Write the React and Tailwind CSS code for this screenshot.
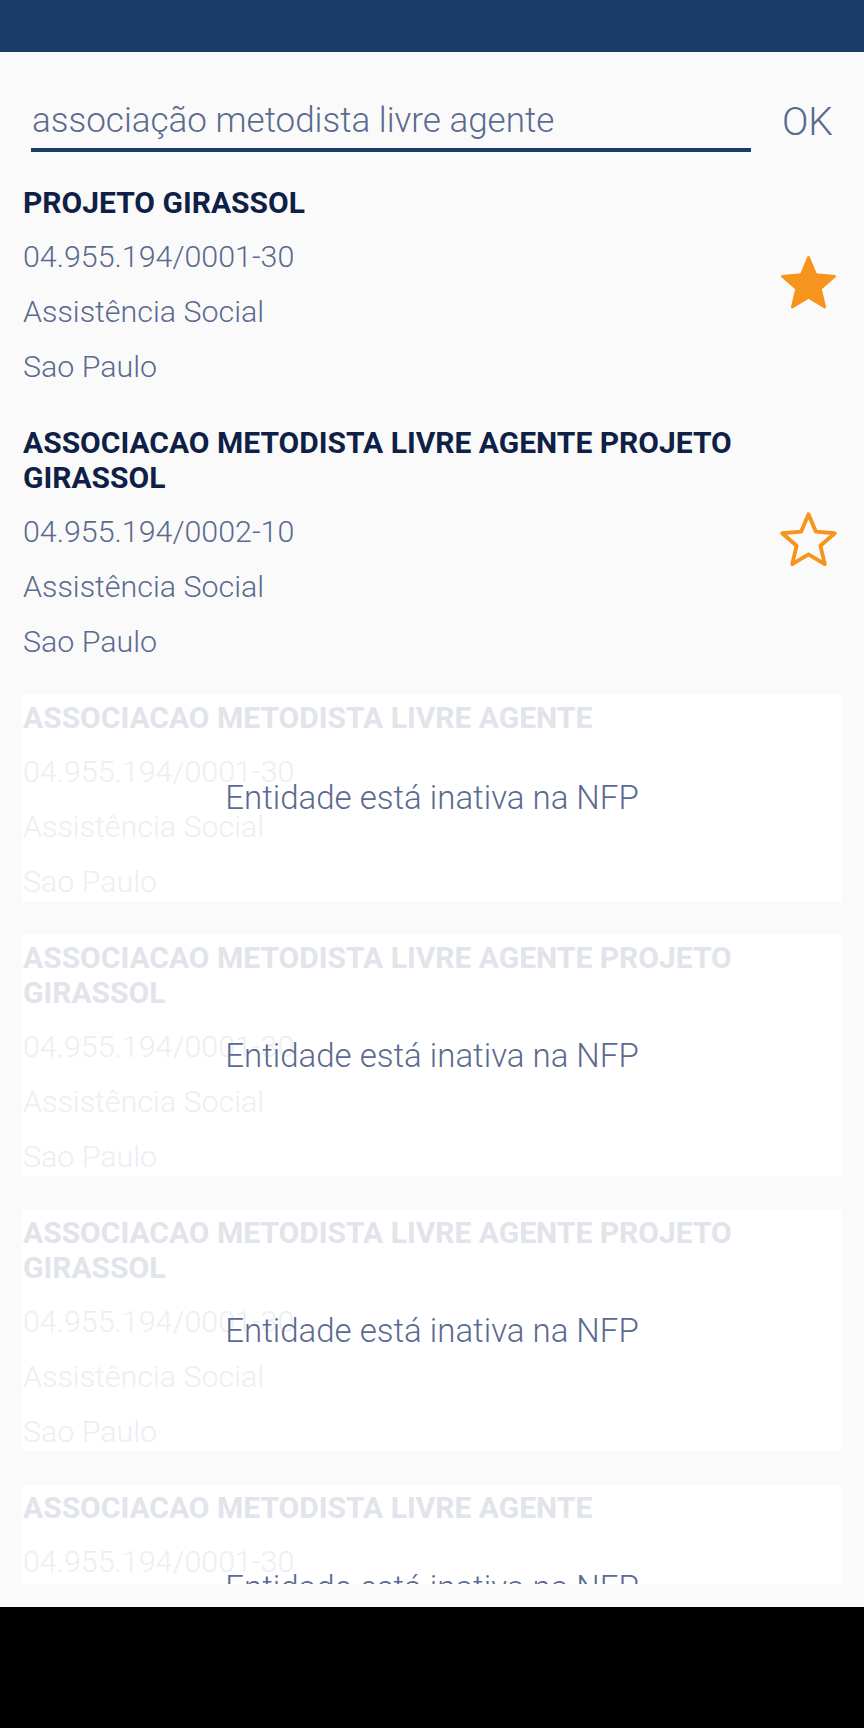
import React from "react";

const entities = [
  { name: "PROJETO GIRASSOL", cnpj: "04.955.194/0001-30", area: "Assistência Social", city: "Sao Paulo", active: true, fav: true },
  { name: "ASSOCIACAO METODISTA LIVRE AGENTE PROJETO GIRASSOL", cnpj: "04.955.194/0002-10", area: "Assistência Social", city: "Sao Paulo", active: true, fav: false },
  { name: "ASSOCIACAO METODISTA LIVRE AGENTE", cnpj: "04.955.194/0001-30", area: "Assistência Social", city: "Sao Paulo", active: false },
  { name: "ASSOCIACAO METODISTA LIVRE AGENTE PROJETO GIRASSOL", cnpj: "04.955.194/0001-30", area: "Assistência Social", city: "Sao Paulo", active: false },
  { name: "ASSOCIACAO METODISTA LIVRE AGENTE PROJETO GIRASSOL", cnpj: "04.955.194/0001-30", area: "Assistência Social", city: "Sao Paulo", active: false },
  { name: "ASSOCIACAO METODISTA LIVRE AGENTE", cnpj: "04.955.194/0001-30", area: "Assistência Social", city: "Sao Paulo", active: false },
];

const STAR = "12,2 14.81,8.63 22,9.24 16.54,13.97 18.18,21 12,17.27 5.82,21 7.46,13.97 2,9.24 9.19,8.63";

function Star({ filled }) {
  return (
    <svg width="63" height="63" viewBox="0 0 24 24">
      <polygon
        points={STAR}
        fill={filled ? "#f7941d" : "none"}
        stroke="#f7941d"
        strokeWidth={filled ? 1 : 1.5}
        strokeLinejoin="round"
      />
    </svg>
  );
}

function EntityCard({ item }) {
  return (
    <div className={`relative flex items-center pt-[5px] pr-[2px] ${item.active ? "" : "bg-white"}`}>
      <div className="flex-1 pl-[1px]">
        <div className={`text-[30px] font-bold leading-[35px] pr-[70px] ${item.active ? "text-[#0f1f45]" : "text-[#e1e4ea]"}`}>
          {item.name}
        </div>
        <div className={`text-[30.4px] font-light leading-[38px] ${item.active ? "text-[#5b6a8f]" : "text-[#eceef3]"}`}>
          <div className="mt-[18px]">{item.cnpj}</div>
          <div className="mt-[17px]">{item.area}</div>
          <div className="mt-[17px]">{item.city}</div>
        </div>
      </div>
      {item.active && (
        <div className="absolute right-[2px] top-0 bottom-0 flex items-center">
          <Star filled={item.fav} />
        </div>
      )}
      {!item.active && (
        <div className="absolute inset-0 flex items-center justify-center">
          <span className="text-[33px] font-light text-[#5b6a8f]">Entidade está inativa na NFP</span>
        </div>
      )}
    </div>
  );
}

export default function App() {
  return (
    <div className="h-[1728px] flex flex-col bg-[#fafafa] overflow-hidden" style={{ fontFamily: "Roboto, 'Noto Sans', sans-serif" }}>
      <div className="h-[52px] shrink-0 bg-[#1a3c68]" />

      <div className="flex items-end gap-[31px] pl-[31px] pr-[31px] mt-[49px] shrink-0">
        <div className="flex-1 border-b-4 border-[#1a3c68] pb-[7px]">
          <div className="text-[35px] font-light leading-[40px] text-[#5b6a8f] pl-[1px]">associação metodista livre agente</div>
        </div>
        <div className="text-[39px] font-light leading-[40px] text-[#5b6a8f] pb-[10px]">OK</div>
      </div>

      <div className="flex-1 min-h-0 overflow-hidden mt-[28px] mb-[23px] px-[22px]">
        <div className="flex flex-col gap-[34px]">
          {entities.map((e, i) => (
            <EntityCard key={i} item={e} />
          ))}
        </div>
      </div>

      <div className="h-[121px] shrink-0 bg-black" />
    </div>
  );
}
